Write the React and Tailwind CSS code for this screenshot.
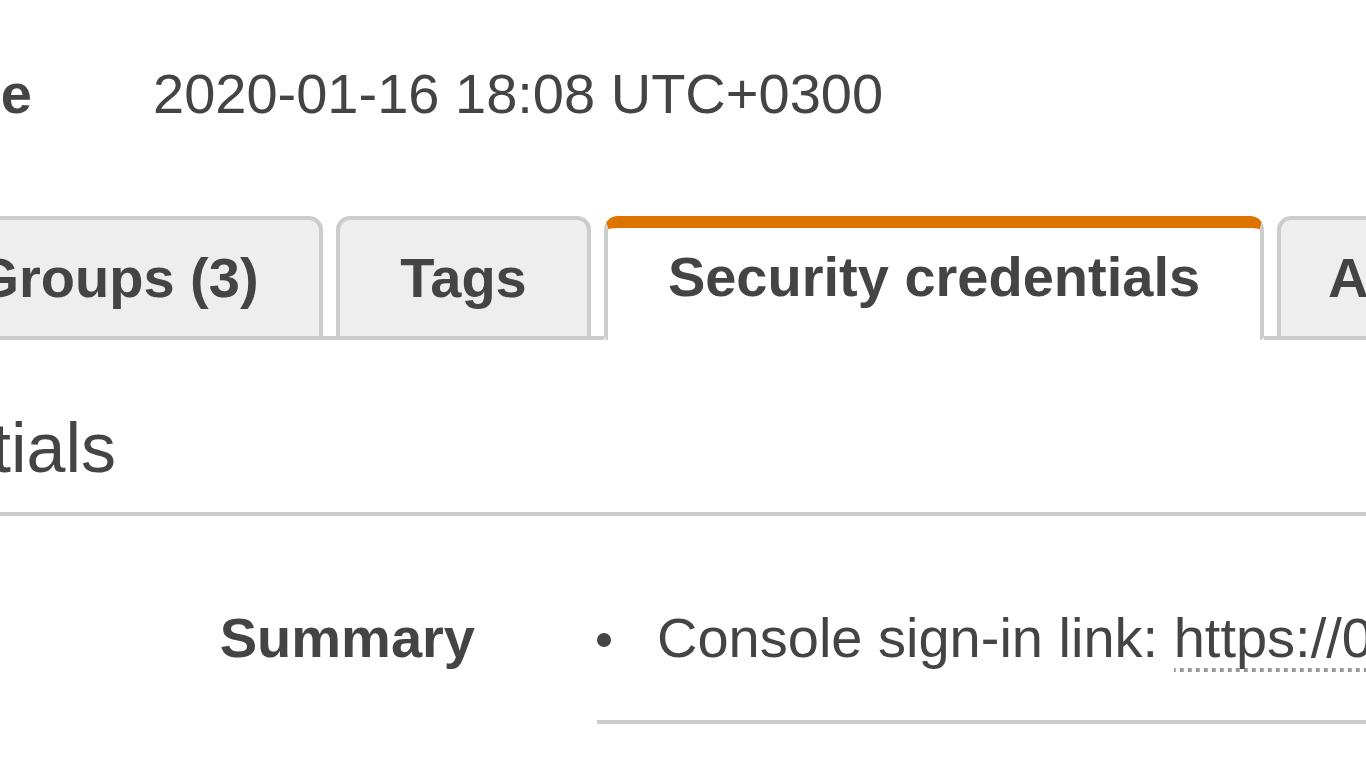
import React from "react";

const tabs = [
  { label: "Groups (3)", width: "w-[412px]" },
  { label: "Tags", width: "w-[255px]" },
];

const InactiveTab = ({ label, width }) => (
  <div
    className={`${width} h-[120px] shrink-0 flex items-center justify-center rounded-t-[14px] border-t-4 border-x-4 border-[#cccccc] bg-[#eeeeee] font-bold whitespace-nowrap`}
  >
    {label}
  </div>
);

const App = () => {
  return (
    <div className="w-[1366px] h-[768px] overflow-hidden bg-white text-[#444444] font-['Liberation_Sans',Arial,sans-serif] text-[56px] leading-[64px]">
      {/* Summary top row */}
      <div className="flex mt-[62px] h-[64px] whitespace-nowrap">
        <div className="w-[32px] shrink-0 flex justify-end font-bold">
          <span>Creation time</span>
        </div>
        <div className="ml-[121px]">2020-01-16 18:08 UTC+0300</div>
      </div>

      {/* Tabs */}
      <div className="flex items-end mt-[90px] -ml-[89px] h-[124px]">
        <div className="flex items-end gap-[13px] border-b-4 border-[#cccccc]">
          {tabs.map(t => (
            <InactiveTab key={t.label} {...t} />
          ))}
          <div className="w-0" />
        </div>
        <div className="w-[660px] h-[124px] shrink-0 flex items-center justify-center pb-[14px] rounded-t-[14px] border-t-[12px] border-t-[#df7300] border-x-4 border-x-[#cccccc] rounded-b-[4px] bg-white font-bold whitespace-nowrap">
          Security credentials
        </div>
        <div className="flex items-end pl-[13px] border-b-4 border-[#cccccc]">
          <InactiveTab label="Access Advisor" width="w-[520px]" />
        </div>
      </div>

      {/* Section heading */}
      <div className="mt-[68px] pb-[24px] border-b-4 border-[#cccccc]">
        <div className="w-[116px] flex justify-end whitespace-nowrap text-[70px] leading-[80px] font-['Liberation_Sans_Narrow','Liberation_Sans',Arial,sans-serif]">
          <span>Security credentials</span>
        </div>
      </div>

      {/* Summary */}
      <div className="flex mt-[90px] whitespace-nowrap">
        <div className="w-[475px] shrink-0 flex justify-end font-bold">
          <span>Summary</span>
        </div>
        <div className="ml-[122px] flex-1 pb-[50px] border-b-4 border-[#cccccc]">
          <div className="flex items-center h-[64px]">
            <span className="w-[14px] h-[14px] mt-[4px] rounded-full bg-[#444444] shrink-0" />
            <span className="ml-[46px]">
              Console sign-in link:{" "}
              <span className="pb-[3px] bg-[linear-gradient(to_right,#999999_50%,transparent_50%)] bg-[length:8px_4px] bg-repeat-x bg-bottom">
                https://012345678901.signin.aws.amazon.com/console
              </span>
            </span>
          </div>
        </div>
      </div>
    </div>
  );
};

export default App;
